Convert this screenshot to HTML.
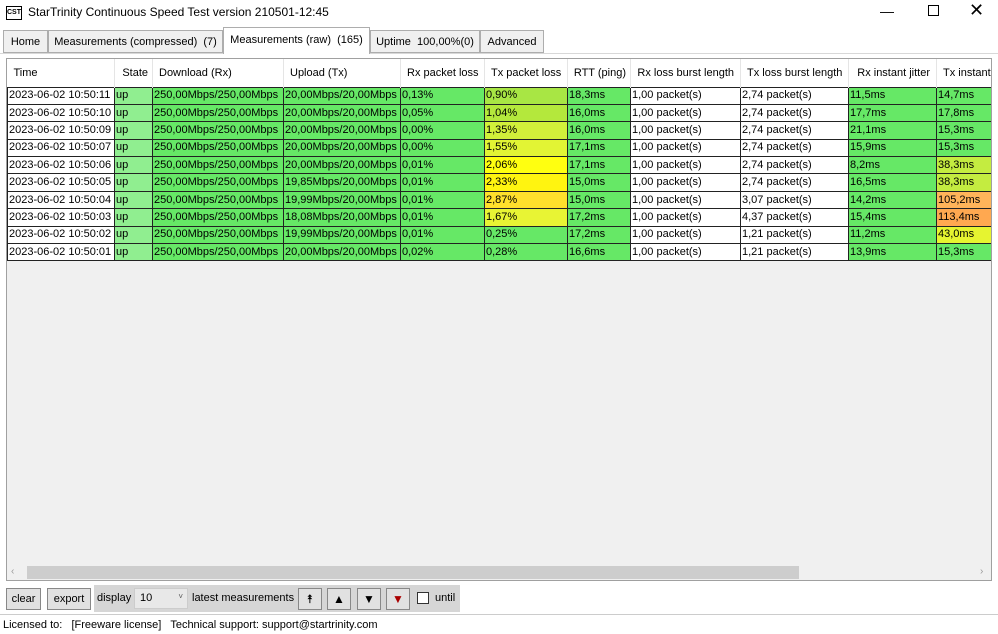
<!DOCTYPE html>
<html><head><meta charset="utf-8"><style>
*{margin:0;padding:0;box-sizing:border-box}
body{width:998px;height:634px;background:#fff;font-family:"Liberation Sans",sans-serif;font-size:11px;color:#000;position:relative;overflow:hidden}
.abs{position:absolute}
.tab{position:absolute;top:30px;height:23px;border:1px solid #adadad;background:#f0f0f0;padding:5px 0 0;text-align:center;font-size:11px;white-space:nowrap}
.grid{position:absolute;left:6px;top:58px;width:986px;height:523px;border:1px solid #a0a0a0;background:#f0f0f0;overflow:hidden}
table{border-collapse:collapse;position:absolute;left:0;top:0;background:#fff;table-layout:fixed;width:989px}
th{height:28px;font-weight:normal;text-align:left;padding:0 6px;background:#fff;border-right:1px solid #e5e5e5;white-space:nowrap;overflow:hidden}
td{height:17.4px;border:1px solid #222;padding:0 1px;white-space:nowrap;line-height:15px;overflow:hidden}
.g{background:#66e866}.u{background:#90ee90}.w{background:#fff}
.btn{position:absolute;top:588px;height:22px;border:1px solid #888;background:#e1e1e1;text-align:center;line-height:20px}
</style></head><body>
<div class="abs" style="left:6px;top:6px;width:16px;height:14px;border:1px solid #000;font-size:7px;font-weight:bold;line-height:12px;text-align:center">CST</div>
<div class="abs" style="left:28px;top:5px;font-size:12px">StarTrinity Continuous Speed Test version 210501-12:45</div>
<div class="abs" style="left:880px;top:3px;font-size:14px">—</div>
<div class="abs" style="left:928px;top:5px;width:11px;height:11px;border:1px solid #000"></div>
<div class="abs" style="left:969px;top:0px;font-size:18px">✕</div>
<div class="abs" style="left:0;top:53px;width:998px;height:1px;background:#d8d8d8"></div>
<div class="tab" style="left:3px;width:45px">Home</div>
<div class="tab" style="left:48px;width:175px">Measurements (compressed)&nbsp; (7)</div>
<div class="tab" style="left:223px;top:27px;height:27px;width:147px;background:#fff;border-bottom:none;padding-top:6px">Measurements (raw)&nbsp; (165)</div>
<div class="tab" style="left:370px;width:110px">Uptime&nbsp; 100,00%(0)</div>
<div class="tab" style="left:480px;width:64px">Advanced</div>
<div class="grid">
<table>
<colgroup><col style="width:107px"><col style="width:38px"><col style="width:131px"><col style="width:117px"><col style="width:84px"><col style="width:83px"><col style="width:63px"><col style="width:110px"><col style="width:108px"><col style="width:88px"><col style="width:60px"></colgroup>
<tr><th>Time</th><th style="text-align:right;padding:0 4px">State</th><th>Download (Rx)</th><th>Upload (Tx)</th><th style="text-align:right">Rx packet loss</th><th style="text-align:right">Tx packet loss</th><th style="text-align:right;padding:0 4px">RTT (ping)</th><th style="text-align:right">Rx loss burst length</th><th style="text-align:right">Tx loss burst length</th><th style="text-align:right">Rx instant jitter</th><th>Tx instant</th></tr>
<tr><td class="w">2023-06-02 10:50:11</td><td class="u">up</td><td class="g">250,00Mbps/250,00Mbps</td><td class="g">20,00Mbps/20,00Mbps</td><td class="g">0,13%</td><td style="background:#a8e644">0,90%</td><td class="g">18,3ms</td><td class="w">1,00 packet(s)</td><td class="w">2,74 packet(s)</td><td class="g">11,5ms</td><td class="g">14,7ms</td></tr>
<tr><td class="w">2023-06-02 10:50:10</td><td class="u">up</td><td class="g">250,00Mbps/250,00Mbps</td><td class="g">20,00Mbps/20,00Mbps</td><td class="g">0,05%</td><td style="background:#b4e83c">1,04%</td><td class="g">16,0ms</td><td class="w">1,00 packet(s)</td><td class="w">2,74 packet(s)</td><td class="g">17,7ms</td><td class="g">17,8ms</td></tr>
<tr><td class="w">2023-06-02 10:50:09</td><td class="u">up</td><td class="g">250,00Mbps/250,00Mbps</td><td class="g">20,00Mbps/20,00Mbps</td><td class="g">0,00%</td><td style="background:#d2f03a">1,35%</td><td class="g">16,0ms</td><td class="w">1,00 packet(s)</td><td class="w">2,74 packet(s)</td><td class="g">21,1ms</td><td class="g">15,3ms</td></tr>
<tr><td class="w">2023-06-02 10:50:07</td><td class="u">up</td><td class="g">250,00Mbps/250,00Mbps</td><td class="g">20,00Mbps/20,00Mbps</td><td class="g">0,00%</td><td style="background:#e2f434">1,55%</td><td class="g">17,1ms</td><td class="w">1,00 packet(s)</td><td class="w">2,74 packet(s)</td><td class="g">15,9ms</td><td class="g">15,3ms</td></tr>
<tr><td class="w">2023-06-02 10:50:06</td><td class="u">up</td><td class="g">250,00Mbps/250,00Mbps</td><td class="g">20,00Mbps/20,00Mbps</td><td class="g">0,01%</td><td style="background:#ffff10">2,06%</td><td class="g">17,1ms</td><td class="w">1,00 packet(s)</td><td class="w">2,74 packet(s)</td><td class="g">8,2ms</td><td style="background:#c4ec40">38,3ms</td></tr>
<tr><td class="w">2023-06-02 10:50:05</td><td class="u">up</td><td class="g">250,00Mbps/250,00Mbps</td><td class="g">19,85Mbps/20,00Mbps</td><td class="g">0,01%</td><td style="background:#fff410">2,33%</td><td class="g">15,0ms</td><td class="w">1,00 packet(s)</td><td class="w">2,74 packet(s)</td><td class="g">16,5ms</td><td style="background:#c4ec40">38,3ms</td></tr>
<tr><td class="w">2023-06-02 10:50:04</td><td class="u">up</td><td class="g">250,00Mbps/250,00Mbps</td><td class="g">19,99Mbps/20,00Mbps</td><td class="g">0,01%</td><td style="background:#ffe02c">2,87%</td><td class="g">15,0ms</td><td class="w">1,00 packet(s)</td><td class="w">3,07 packet(s)</td><td class="g">14,2ms</td><td style="background:#ffb45a">105,2ms</td></tr>
<tr><td class="w">2023-06-02 10:50:03</td><td class="u">up</td><td class="g">250,00Mbps/250,00Mbps</td><td class="g">18,08Mbps/20,00Mbps</td><td class="g">0,01%</td><td style="background:#e8f434">1,67%</td><td class="g">17,2ms</td><td class="w">1,00 packet(s)</td><td class="w">4,37 packet(s)</td><td class="g">15,4ms</td><td style="background:#ffa850">113,4ms</td></tr>
<tr><td class="w">2023-06-02 10:50:02</td><td class="u">up</td><td class="g">250,00Mbps/250,00Mbps</td><td class="g">19,99Mbps/20,00Mbps</td><td class="g">0,01%</td><td class="g">0,25%</td><td class="g">17,2ms</td><td class="w">1,00 packet(s)</td><td class="w">1,21 packet(s)</td><td class="g">11,2ms</td><td style="background:#e6f430">43,0ms</td></tr>
<tr><td class="w">2023-06-02 10:50:01</td><td class="u">up</td><td class="g">250,00Mbps/250,00Mbps</td><td class="g">20,00Mbps/20,00Mbps</td><td class="g">0,02%</td><td class="g">0,28%</td><td class="g">16,6ms</td><td class="w">1,00 packet(s)</td><td class="w">1,21 packet(s)</td><td class="g">13,9ms</td><td class="g">15,3ms</td></tr>
</table>
<div class="abs" style="left:0;top:505px;width:984px;height:16px;background:#f0f0f0"></div>
<div class="abs" style="left:4px;top:507px;font-size:10px;color:#999">‹</div>
<div class="abs" style="left:20px;top:507px;width:772px;height:13px;background:#cdcdcd"></div>
<div class="abs" style="left:973px;top:507px;font-size:10px;color:#999">›</div>
</div>
<div class="abs" style="left:94px;top:585px;width:366px;height:27px;background:#d6d6d6"></div>
<div class="btn" style="left:6px;width:35px">clear</div>
<div class="btn" style="left:47px;width:44px">export</div>
<div class="abs" style="left:97px;top:592px">display</div>
<div class="abs" style="left:134px;top:588px;width:54px;height:21px;background:#e8e8e8;border:1px solid #ccc;padding:3px 0 0 5px">10<span style="position:absolute;right:4px;top:3px;font-size:8px;color:#555">˅</span></div>
<div class="abs" style="left:192px;top:592px">latest measurements</div>
<div class="btn" style="left:298px;width:24px;font-size:12px">⯭</div>
<div class="btn" style="left:327px;width:24px;font-size:12px">▲</div>
<div class="btn" style="left:357px;width:24px;font-size:12px">▼</div>
<div class="btn" style="left:386px;width:24px;font-size:12px;color:#a00">▼</div>
<div class="abs" style="left:417px;top:592px;width:12px;height:12px;border:1px solid #333;background:#fff"></div>
<div class="abs" style="left:435px;top:592px">until</div>
<div class="abs" style="left:0;top:614px;width:998px;height:1px;background:#ccc"></div>
<div class="abs" style="left:3px;top:619px">Licensed to:&nbsp;&nbsp; [Freeware license]&nbsp;&nbsp; Technical support: support@startrinity.com</div>
</body></html>
